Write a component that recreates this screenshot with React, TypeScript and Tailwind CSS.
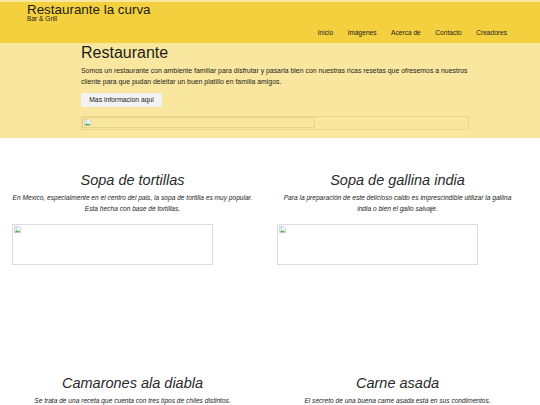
import React from "react";

const navItems = ["Inicio", "Imágenes", "Acerca de", "Contacto", "Creadores"];

interface Dish {
  title: string;
  lines: string[];
}

const dishes: Dish[] = [
  {
    title: "Sopa de tortillas",
    lines: [
      "En Mexico, especialmente en el centro del pais, la sopa de tortilla es muy popular.",
      "Esta hecha con base de tortillas.",
    ],
  },
  {
    title: "Sopa de gallina india",
    lines: [
      "Para la preparación de este delicioso caldo es imprescindible utilizar la gallina",
      "india o bien el gallo salvaje.",
    ],
  },
  {
    title: "Camarones ala diabla",
    lines: ["Se trata de una receta que cuenta con tres tipos de chiles distintos."],
  },
  {
    title: "Carne asada",
    lines: ["El secreto de una buena carne asada está en sus condimentos."],
  },
];

function BrokenIcon() {
  return (
    <svg width="7" height="7" viewBox="0 0 16 16" className="absolute left-[1px] top-[1px]">
      <path d="M1 1h10l4 4v10H1z" fill="#f4f4f4" stroke="#9aa" strokeWidth="1" />
      <path d="M2 14l4-5 3 3 2-2 3 4z" fill="#4caf50" />
      <circle cx="5" cy="5" r="1.6" fill="#7ab8e8" />
    </svg>
  );
}

function BrokenImage({ className }: { className: string }) {
  return (
    <div className={`relative ${className}`}>
      <BrokenIcon />
    </div>
  );
}

export default function App() {
  return (
    <div className="min-h-screen bg-white font-['Liberation_Sans',Arial,sans-serif] text-[#1c1c1c]">
      <div className="h-[2px] bg-[#f9e79f]" />

      {/* Top bar */}
      <header className="flex h-[41px] bg-[#f4d03f]">
        <div className="pl-[27px]">
          <div className="text-[13.4px] leading-[16px]">Restaurante la curva</div>
          <div className="-mt-[3px] text-[6.6px] leading-[7px]">Bar &amp; Grill</div>
        </div>
        <nav className="ml-auto flex items-end gap-[14.5px] pb-[6px] pr-[33px] text-[6.6px] leading-[8px]">
          {navItems.map((item) => (
            <span key={item}>{item}</span>
          ))}
        </nav>
      </header>

      {/* Hero */}
      <section className="bg-[#f9e79f] pb-[8px]">
        <div className="ml-[81px] w-[388px]">
          <h1 className="pt-[1px] text-[16px] leading-[18px]">Restaurante</h1>
          <p className="mt-[4px] text-[6.9px] leading-[10.7px]">
            Somos un restaurante con ambiente familiar para disfrutar y pasarla bien con nuestras ricas resetas que ofresemos a nuestros
            <br />
            cliente para que pudan deleitar un buen platillo en familia amigos.
          </p>
          <button className="mt-[6px] flex h-[14px] w-[81px] items-center justify-center rounded-[2px] bg-[#f2f2f2] text-[6.8px]">
            Mas informacion aqui
          </button>
          <div className="mt-[9px] h-[14px] border border-[#efd78a]">
            <BrokenImage className="h-[11px] w-[233px] border border-[#e9d48c]" />
          </div>
        </div>
      </section>

      {/* Dishes */}
      <section className="grid w-[530px] grid-cols-2 pt-[34px]">
        {dishes.map((dish) => (
          <div key={dish.title} className="h-[203px] px-[11px]">
            <h2 className="text-center text-[14.5px] italic leading-[17px] text-[#2a2a2a]">{dish.title}</h2>
            <p className="mt-[3.5px] text-center text-[6.6px] italic leading-[10.6px] text-[#222]">
              {dish.lines.map((line) => (
                <span key={line} className="block whitespace-nowrap">
                  {line}
                </span>
              ))}
            </p>
            <BrokenImage className="ml-[1px] mt-[10px] h-[41px] w-[201px] border border-[#dcdcdc]" />
          </div>
        ))}
      </section>
    </div>
  );
}
